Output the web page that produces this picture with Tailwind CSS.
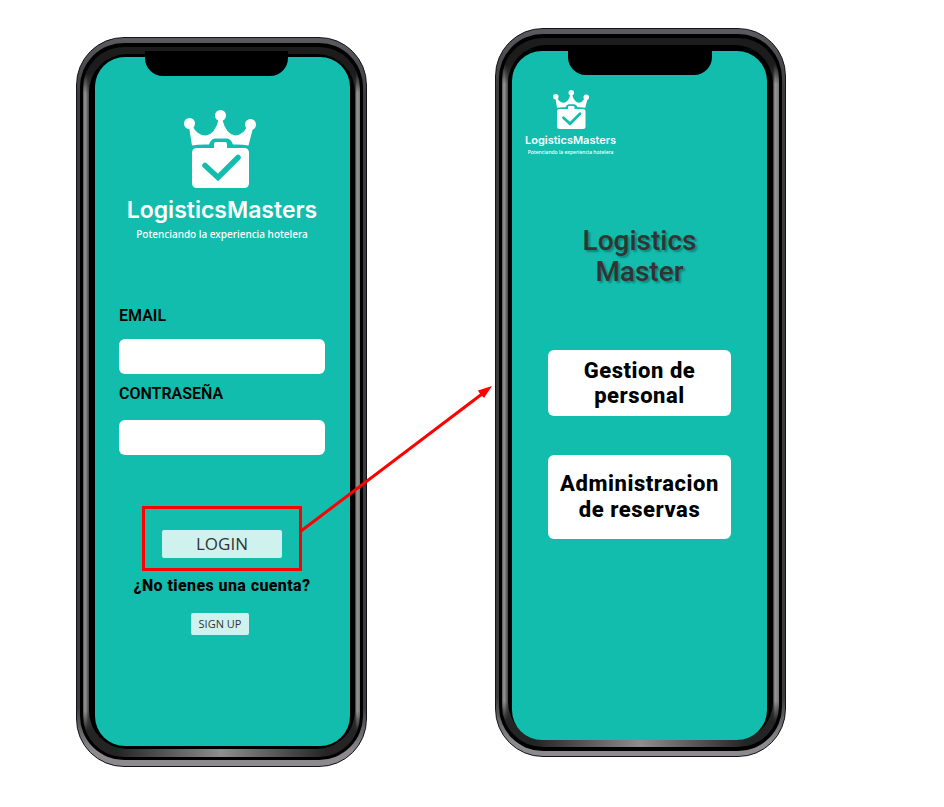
<!DOCTYPE html>
<html lang="es">
<head>
<meta charset="utf-8">
<meta name="viewport" content="width=device-width, initial-scale=1">
<title>LogisticsMasters</title>
<script src="https://cdn.jsdelivr.net/npm/@tailwindcss/browser@4"></script>
</head>
<body class="min-h-screen bg-white font-['Roboto',sans-serif] text-black">
<svg class="hidden" aria-hidden="true">
  <symbol id="mark" viewBox="0 0 72 78">
    <g fill="#fff">
      <circle cx="5.500" cy="13.500" r="5.500"/><circle cx="36.500" cy="5.500" r="5.500"/><circle cx="66.500" cy="14.500" r="5.500"/>
      <path d="M5 17L8 35.500Q16 34 25 34.500Q27 29 31 28.500H43Q47 29 49 34.500Q57 34 64.500 35.500L69 18L63 17Q58 25.500 51 25.500Q42 24 38.500 10H34.500Q31 24 22 25.500Q13 25.500 8.500 16Z"/>
      <path d="M13 38H30V34Q30 32 32 32H41Q43 32 43 34V38H60Q65 38 65 43V73Q65 78 60 78H13Q8 78 8 73V43Q8 38 13 38Z"/>
    </g>
    <path d="M21 55.500L34 67.500L54 47.500" fill="none" stroke="#12bdae" stroke-width="5.500" stroke-linecap="round" stroke-linejoin="miter"/>
  </symbol>
</svg>
<main class="relative flex items-start gap-32 pt-7 pl-[76px]">

  <!-- Login phone -->
  <section aria-label="Inicio de sesión" class="mt-[9px] w-[291px] shrink-0 rounded-[48px] border border-[#12121c] bg-[linear-gradient(#5c5c60,#3c3c3e_8%,#3c3c3e_92%,#8c8a8c_98%)] px-[3px] pt-[5px] pb-[6px]">
    <div class="rounded-[44px] bg-black px-[3px] pt-1 pb-[3px]">
      <div class="rounded-[41px] bg-[linear-gradient(90deg,#242424_12%,#8e8e8e_50%,#242424_88%),linear-gradient(#1c1c1c_26px,transparent_46px,transparent_calc(100%-46px),#242424_calc(100%-26px)),linear-gradient(90deg,#555,#999_2px,#444_6px,#333_calc(100%-5px),#999_calc(100%-3px),#777)] bg-[size:100%_14px,100%_100%,100%_100%] bg-[position:bottom,top,top] bg-no-repeat pt-[7px] pr-[5px] pb-2 pl-[6px]">
        <div class="rounded-[38px] bg-black pt-[3px] pr-[5px] pb-[3px] pl-[6px]">
          <div class="relative flex flex-col items-center rounded-[30px] bg-[#12bdae] pt-[53px] pr-[25px] pb-[111px] pl-6">
            <div class="absolute -top-[6px] right-[62px] left-[50px] h-[25px] rounded-b-[18px] bg-black"></div>
            <svg class="mr-1 h-[78px] w-[72px]" aria-hidden="true"><use href="#mark"/></svg>
            <p class="mt-[6px] font-['Inter',sans-serif] text-[23px] leading-8 font-semibold whitespace-nowrap text-white">LogisticsMasters</p>
            <p class="font-['Noto_Sans',sans-serif] text-[10px] leading-4 font-medium whitespace-nowrap text-white">Potenciando la experiencia hotelera</p>
            <form class="mt-[62px] flex w-full flex-col items-center">
              <label for="email" class="self-start text-base leading-6 font-semibold">EMAIL</label>
              <input id="email" type="email" class="mt-[11px] h-[35px] w-full rounded-md bg-white px-3">
              <label for="clave" class="mt-2 self-start text-base leading-6 font-semibold">CONTRASEÑA</label>
              <input id="clave" type="password" class="mt-[14px] h-[35px] w-full rounded-md bg-white px-3">
              <div class="mt-[51px] border-[3px] border-[#ff0000] px-[17px] pt-[21px] pb-[10px]">
                <button type="submit" class="block h-7 w-[120px] rounded-xs bg-[#d0f2ef] font-['Open_Sans',sans-serif] text-[17px] leading-7 text-[#333]">LOGIN</button>
              </div>
            </form>
            <p class="mt-[3px] text-base leading-6 font-extrabold tracking-wide whitespace-nowrap">¿No tienes una cuenta?</p>
            <button type="button" class="mt-[15px] mr-1 h-[22px] w-[58px] rounded-xs bg-[#d0f2ef] font-['Open_Sans',sans-serif] text-[11px] leading-5 text-[#333]">SIGN UP</button>
          </div>
        </div>
      </div>
    </div>
  </section>

  <!-- Menu phone -->
  <section aria-label="Menú principal" class="w-[291px] shrink-0 rounded-[48px] border border-[#12121c] bg-[linear-gradient(#5c5c60,#3c3c3e_8%,#3c3c3e_92%,#8c8a8c_98%)] px-[3px] pt-[5px] pb-[5px]">
    <div class="rounded-[44px] bg-black px-[3px] pt-1 pb-1">
      <div class="rounded-[41px] bg-[linear-gradient(90deg,#242424_12%,#8e8e8e_50%,#242424_88%),linear-gradient(#1c1c1c_26px,transparent_46px,transparent_calc(100%-46px),#242424_calc(100%-26px)),linear-gradient(90deg,#555,#999_2px,#444_6px,#333_calc(100%-6px),#999_calc(100%-4px),#777)] bg-[size:100%_14px,100%_100%,100%_100%] bg-[position:bottom,top,top] bg-no-repeat pt-[7px] pr-[6px] pb-[7px] pl-[6px]">
        <div class="rounded-[38px] bg-black pt-[6px] pr-[6px] pl-1">
          <div class="relative flex flex-col items-center rounded-[30px] bg-[#12bdae] px-9 pt-[39px] pb-[201px]">
            <div class="absolute -top-[6px] right-[55px] left-[56px] h-[30px] rounded-b-[18px] bg-black"></div>
            <div class="-ml-[23px] flex flex-col items-center self-start">
              <svg class="h-[39px] w-9" aria-hidden="true"><use href="#mark"/></svg>
              <p class="mt-[3px] font-['Inter',sans-serif] text-[11px] leading-4 font-semibold whitespace-nowrap text-white">LogisticsMasters</p>
              <p class="font-['Noto_Sans',sans-serif] text-[5px] leading-2 font-medium whitespace-nowrap text-white">Potenciando la experiencia hotelera</p>
            </div>
            <h1 class="mt-[69px] text-center text-[28px] leading-[31px] font-medium text-[#333] [text-shadow:2px_2px_2px_rgb(0_0_0/0.3)]">Logistics<br>Master</h1>
            <button type="button" class="mt-[63px] w-full rounded-md bg-white py-2 text-[22px] leading-[25px] font-extrabold tracking-wide">Gestion de<br>personal</button>
            <button type="button" class="mt-[39px] w-full rounded-md bg-white py-4 text-[22px] leading-[26px] font-extrabold tracking-wide">Administracion<br>de reservas</button>
          </div>
        </div>
      </div>
    </div>
  </section>

  <!-- Flow arrow from the login button to the menu -->
  <svg class="pointer-events-none absolute top-[384px] left-[300px] h-[150px] w-[194px]" viewBox="300 384 194 150" aria-hidden="true">
    <path d="M301 531L482 394" fill="none" stroke="#f00" stroke-width="3"/>
    <path d="M492 386L478 390.500L479.500 393L484 398Z" fill="#f00"/>
  </svg>
</main>
</body>
</html>
